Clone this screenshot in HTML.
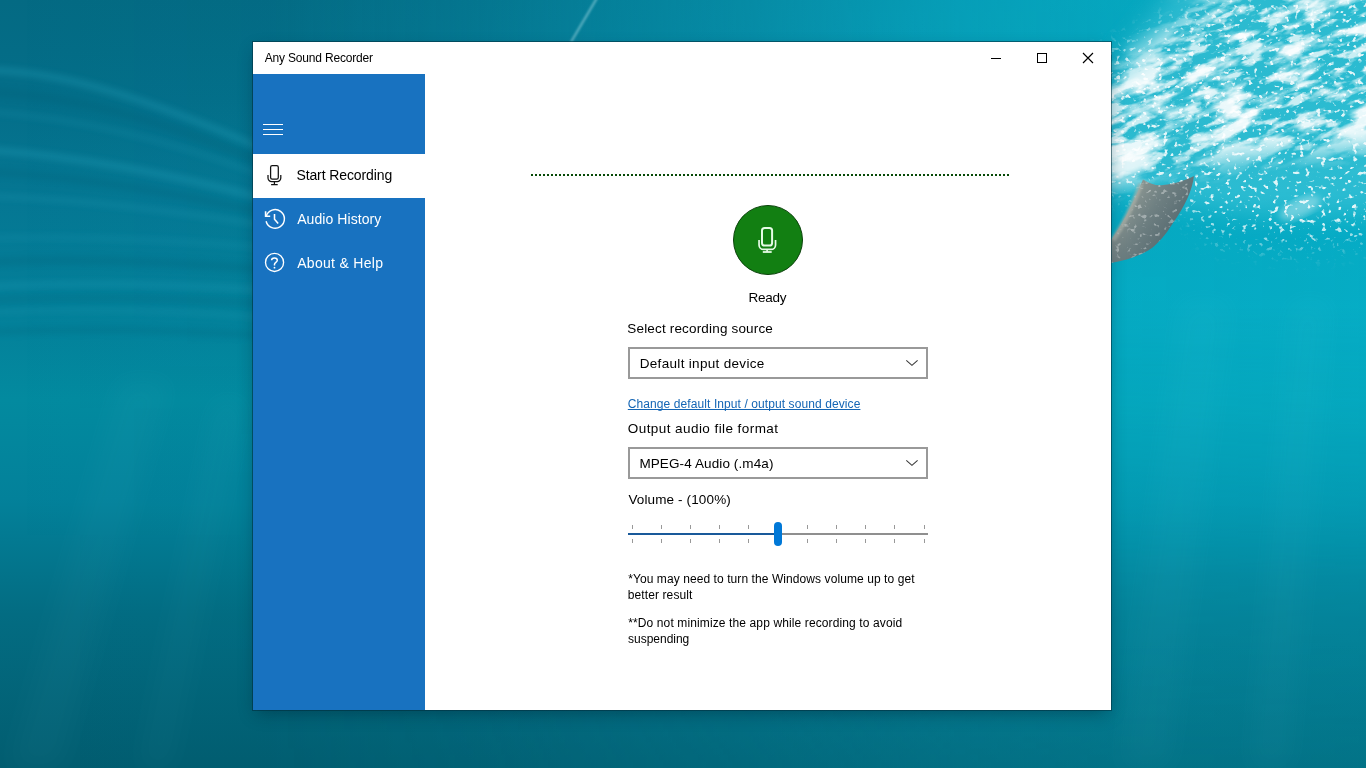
<!DOCTYPE html>
<html lang="en">
<head>
<meta charset="utf-8">
<title>Any Sound Recorder</title>
<style>
*{box-sizing:border-box;margin:0;padding:0}
html,body{width:1366px;height:768px;overflow:hidden;background:#067088}
body{position:relative;font-family:"Liberation Sans",sans-serif;color:#000}
#bg{position:absolute;left:0;top:0;width:1366px;height:768px;display:block}
#win{position:absolute;left:253px;top:42px;width:858px;height:668px;background:#fff;will-change:transform;
 box-shadow:0 0 0 1px rgba(0,45,60,.55),0 6px 16px -3px rgba(0,25,40,.4)}
.t{position:absolute;white-space:nowrap;line-height:1}
#side{position:absolute;left:0;top:32px;width:172px;height:636px;background:#1872c0}
#sel{position:absolute;left:0;top:112px;width:172px;height:44px;background:#fff}
svg{position:absolute;overflow:visible}
.combo{position:absolute;left:375px;width:300px;height:32px;border:2px solid #999;background:#fff}
.combo .t{left:10px}
.note{font-size:12px;line-height:16px}
#ticks i{position:absolute;width:1px;height:4px;background:#999}
</style>
</head>
<body>
<svg id="bg" width="1366" height="768" viewBox="0 0 1366 768">
<defs>
 <linearGradient id="gv" x1="0" y1="0" x2="0" y2="1">
  <stop offset="0" stop-color="#046a83"/>
  <stop offset=".13" stop-color="#046e89"/>
  <stop offset=".26" stop-color="#057793"/>
  <stop offset=".40" stop-color="#047f99"/>
  <stop offset=".52" stop-color="#038a9f"/>
  <stop offset=".65" stop-color="#03819a"/>
  <stop offset=".80" stop-color="#036c82"/>
  <stop offset="1" stop-color="#025d70"/>
 </linearGradient>
 <linearGradient id="gh" x1="0" y1="0" x2="1" y2="0">
  <stop offset="0" stop-color="#08bcd8" stop-opacity="0"/>
  <stop offset=".20" stop-color="#08bcd8" stop-opacity=".02"/>
  <stop offset=".35" stop-color="#08bcd8" stop-opacity=".15"/>
  <stop offset=".55" stop-color="#0abed9" stop-opacity=".40"/>
  <stop offset=".70" stop-color="#08bed8" stop-opacity=".62"/>
  <stop offset=".82" stop-color="#06bed6" stop-opacity=".72"/>
  <stop offset="1" stop-color="#06bed6" stop-opacity=".76"/>
 </linearGradient>
 <linearGradient id="gfade" x1="0" y1="0" x2="0" y2="1">
  <stop offset="0" stop-color="#fff" stop-opacity="1"/>
  <stop offset=".40" stop-color="#fff" stop-opacity=".95"/>
  <stop offset=".75" stop-color="#fff" stop-opacity=".42"/>
  <stop offset="1" stop-color="#fff" stop-opacity="0.3"/>
 </linearGradient>
 <mask id="mfade"><rect width="1366" height="768" fill="url(#gfade)"/></mask>
 <filter id="b9" x="-20%" y="-20%" width="140%" height="140%"><feGaussianBlur stdDeviation="13"/></filter>
 <mask id="mfoam" maskUnits="userSpaceOnUse" x="1000" y="-20" width="400" height="450">
  <path d="M1088 92L1150 48L1236 -24L1400 -24L1400 146L1250 156L1088 186Z" fill="#fff" filter="url(#b9)"/>
 </mask>
 <mask id="mbub" maskUnits="userSpaceOnUse" x="1000" y="-20" width="400" height="450">
  <path d="M1100 60L1236 -14L1390 -14L1390 236L1300 248L1215 238L1175 200L1100 190Z" fill="#fff" filter="url(#b9)"/>
 </mask>
 <filter id="foam" x="0" y="0" width="100%" height="100%" color-interpolation-filters="sRGB">
  <feTurbulence type="fractalNoise" baseFrequency="0.016 0.05" numOctaves="5" seed="4"/>
  <feColorMatrix type="matrix" values="0 0 0 0 1  0 0 0 0 1  0 0 0 0 1  5.5 0 0 0 -2.62"/>
 </filter>
 <filter id="foam2" x="0" y="0" width="100%" height="100%" color-interpolation-filters="sRGB">
  <feTurbulence type="fractalNoise" baseFrequency="0.04 0.11" numOctaves="4" seed="21"/>
  <feColorMatrix type="matrix" values="0 0 0 0 1  0 0 0 0 1  0 0 0 0 1  6 0 0 0 -3.05"/>
 </filter>
 <filter id="bub" x="0" y="0" width="100%" height="100%" color-interpolation-filters="sRGB">
  <feTurbulence type="fractalNoise" baseFrequency="0.19 0.21" numOctaves="2" seed="11"/>
  <feColorMatrix type="matrix" values="0 0 0 0 1  0 0 0 0 1  0 0 0 0 1  8 0 0 0 -4.9"/>
 </filter>
 <linearGradient id="gfin" x1="1125" y1="200" x2="1175" y2="235" gradientUnits="userSpaceOnUse">
  <stop offset="0" stop-color="#8d9893"/><stop offset=".45" stop-color="#6f8082"/><stop offset="1" stop-color="#566a70"/>
 </linearGradient>
 <clipPath id="cfin"><path d="M1111 263L1111 240C1120 228 1131 208 1143 179.500C1150 184 1157 186 1163 185C1175 184 1186 180 1194 176C1192 191 1185 206 1173 223C1165 236 1158 243 1152 248C1142 255 1128 260 1111 263Z"/></clipPath>
 <filter id="b12" x="-50%" y="-10%" width="200%" height="120%"><feGaussianBlur stdDeviation="12"/></filter>
 <filter id="b6"><feGaussianBlur stdDeviation="6"/></filter>
 <filter id="b3"><feGaussianBlur stdDeviation="3"/></filter>
 <filter id="b1"><feGaussianBlur stdDeviation=".8"/></filter>
</defs>
<rect width="1366" height="768" fill="url(#gv)"/>
<rect width="1366" height="768" fill="url(#gh)" mask="url(#mfade)"/>
<!-- foam -->
<path d="M1085 100L1190 -30L1400 -30L1400 215L1250 215L1085 190Z" fill="#5ad2e4" opacity=".45" filter="url(#b12)"/>
<g mask="url(#mfoam)">
 <g transform="rotate(-18 1250 90)">
  <rect x="900" y="-250" width="700" height="700" filter="url(#foam)" opacity=".9"/>
  <rect x="900" y="-250" width="700" height="700" filter="url(#foam2)" opacity=".75"/>
 </g>
</g>
<g mask="url(#mbub)">
 <rect x="1000" y="0" width="366" height="420" filter="url(#bub)" opacity=".85"/>
</g>
<ellipse cx="1130" cy="164" rx="24" ry="11" transform="rotate(-18 1130 164)" fill="#fff" opacity=".85" filter="url(#b3)"/>
<ellipse cx="1300" cy="208" rx="22" ry="9" transform="rotate(-25 1300 208)" fill="#fff" opacity=".35" filter="url(#b3)"/>
<!-- fin -->
<path d="M1111 263L1111 240C1120 228 1131 208 1143 179.500C1150 184 1157 186 1163 185C1175 184 1186 180 1194 176C1192 191 1185 206 1173 223C1165 236 1158 243 1152 248C1142 255 1128 260 1111 263Z" fill="url(#gfin)"/>
<rect x="1105" y="170" width="95" height="100" filter="url(#bub)" opacity=".35" clip-path="url(#cfin)"/>
<path d="M1141 184C1133 205 1124 224 1113 240" stroke="#a9b0a8" stroke-width="5" fill="none" opacity=".7" filter="url(#b1)"/>
<!-- waves -->
<g fill="none" stroke="#27a5bf" stroke-linecap="round" filter="url(#b3)" opacity=".3">
 <path d="M-10 70C60 72 140 95 270 152" stroke-width="7"/>
 <path d="M-10 112C80 118 170 140 270 178" stroke-width="5" opacity=".6"/>
 <path d="M-10 150C90 158 180 176 270 200" stroke-width="7"/>
 <path d="M-10 196C90 200 180 212 270 226" stroke-width="5" opacity=".7"/>
 <path d="M-10 238C90 236 180 240 270 248" stroke-width="5" opacity=".6"/>
 <path d="M-10 286C90 282 180 284 270 290" stroke-width="6" opacity=".8"/>
 <path d="M-10 312C90 308 180 310 270 318" stroke-width="4" opacity=".7"/>
</g>
<g fill="none" stroke="#03586e" stroke-linecap="round" filter="url(#b3)" opacity=".2">
 <path d="M-10 92C70 96 160 118 270 166" stroke-width="8"/>
 <path d="M-10 172C90 178 180 194 270 214" stroke-width="7"/>
 <path d="M-10 262C90 258 180 262 270 270" stroke-width="8"/>
 <path d="M-10 300C90 296 180 298 270 304" stroke-width="5"/>
 <path d="M-10 332C90 328 180 330 270 336" stroke-width="6"/>
</g>
<!-- streak -->
<path d="M597 -2L571 42" stroke="#a8dde6" stroke-width="2.200" opacity=".55" filter="url(#b1)"/>
<!-- rays -->
<g filter="url(#b12)" opacity=".03" fill="#8fe6f2">
 <path d="M1180 300L1230 300L1170 768L1120 768Z"/>
 <path d="M1290 300L1330 300L1290 768L1250 768Z"/>
 <path d="M120 380L170 380L60 768L10 768Z"/>
 <path d="M215 400L245 400L170 768L140 768Z"/>
</g>
<!--BG3-->
</svg>
<div id="win">
 <div id="side"></div>
 <div id="sel"></div>

 <div class="t" id="title" style="left:11.7px;top:10px;font-size:12px;letter-spacing:-0.18px">Any Sound Recorder</div>
 <!-- caption buttons -->
 <svg style="left:730px;top:0" width="128" height="32" viewBox="0 0 128 32" fill="none" stroke="#000" stroke-width="1">
  <path d="M8 16.5h10"/>
  <rect x="54.5" y="11.5" width="9" height="9"/>
  <path d="M100 11l10 10M110 11l-10 10" stroke-width="1.150"/>
 </svg>
 <!-- hamburger -->
 <svg style="left:10px;top:82px" width="20" height="12" viewBox="0 0 20 12" fill="#fff">
  <rect x="0" y="0" width="20" height="1"/><rect x="0" y="5" width="20" height="1"/><rect x="0" y="10" width="20" height="1"/>
 </svg>
 <!-- nav: mic -->
 <svg style="left:12px;top:121px" width="20" height="24" viewBox="0 0 20 24" fill="none" stroke="#111" stroke-width="1.25">
  <rect x="5.600" y="2.600" width="7.700" height="13.600" rx="1.600"/>
  <path d="M3 12v2.900a3.600 3.600 0 0 0 3.600 3.600h5.600a3.600 3.600 0 0 0 3.600-3.600V12M9.400 18.500v3M6.100 21.500h6.600"/>
 </svg>
 <div class="t" id="n1" style="left:43.4px;top:126px;font-size:14px;color:#000;letter-spacing:-0.1px">Start Recording</div>
 <!-- nav: history -->
 <svg style="left:10px;top:165px" width="24" height="24" viewBox="0 0 24 24" fill="none" stroke="#fff" stroke-width="1.45">
  <path d="M3.170 9.300A9.300 9.300 0 1 1 3.090 14.200"/>
  <path d="M2.600 4.300V9.300H7.200" stroke-width="1.600"/>
  <path d="M11.500 7v5.300l3.700 4.200" stroke-width="1.550"/>
 </svg>
 <div class="t" id="n2" style="left:44.2px;top:170px;font-size:14px;color:#fff;letter-spacing:0.07px">Audio History</div>
 <!-- nav: help -->
 <svg style="left:10px;top:209px" width="24" height="24" viewBox="0 0 24 24" fill="none" stroke="#fff" stroke-width="1.350">
  <circle cx="11.550" cy="11.450" r="9.050"/>
  <path d="M8.600 9.200C8.600 7.800 9.900 6.950 11.500 6.950C13.200 6.950 14.300 7.900 14.300 9.300C14.300 11.300 11.500 11.400 11.500 13.300V14.500" stroke-width="1.500"/>
  <circle cx="11.500" cy="16.700" r=".9" fill="#fff" stroke="none"/>
 </svg>
 <div class="t" id="n3" style="left:44.2px;top:214px;font-size:14px;color:#fff;letter-spacing:0.3px">About &amp; Help</div>

 <!-- dotted line -->
 <div id="dots" style="position:absolute;left:278px;top:132px;width:478px;height:2px;background:repeating-linear-gradient(90deg,#074a07 0 2px,transparent 2px 4px)"></div>
 <!-- record button -->
 <div id="rec" style="position:absolute;left:480px;top:163px;width:70px;height:70px;border-radius:50%;background:#127f12;border:1px solid #0a420a"></div>
 <svg style="left:502px;top:183px" width="26" height="30" viewBox="0 0 26 30" fill="none" stroke="#e6fbe6">
  <rect x="7" y="3" width="10.100" height="17.500" rx="2.600" stroke-width="2"/>
  <path d="M4.050 15v4.900a4.500 4.500 0 0 0 4.500 4.500h7.500a4.500 4.500 0 0 0 4.500-4.500V15M12.100 24.400V27" stroke-width="1.700"/>
  <path d="M7.800 27H16.700" stroke-width="1.800"/>
 </svg>
 <div class="t" id="ready" style="left:495.6px;top:249px;font-size:13.5px;letter-spacing:-0.3px">Ready</div>

 <div class="t" id="l1" style="left:374.3px;top:280px;font-size:13.5px;letter-spacing:0.17px">Select recording source</div>
 <div class="combo" style="top:305px"><span class="t" id="c1" style="left:9.7px;top:8px;font-size:13.5px;letter-spacing:0.32px">Default input device</span>
  <svg style="left:275px;top:10px" width="14" height="9" viewBox="0 0 14 9" fill="none" stroke="#3a3a3a" stroke-width="1.100"><path d="M1.300 1.400L6.950 6.350L12.600 1.400"/></svg></div>
 <div class="t" id="lnk" style="left:374.8px;top:356px;font-size:12px;color:#1465b4;text-decoration:underline;text-decoration-skip-ink:none;text-decoration-thickness:1px;text-underline-offset:1px;letter-spacing:0.09px">Change default Input / output sound device</div>
 <div class="t" id="l2" style="left:374.8px;top:380px;font-size:13.5px;letter-spacing:0.43px">Output audio file format</div>
 <div class="combo" style="top:405px"><span class="t" id="c2" style="left:9.4px;top:8px;font-size:13.5px;letter-spacing:0.11px">MPEG-4 Audio (.m4a)</span>
  <svg style="left:275px;top:10px" width="14" height="9" viewBox="0 0 14 9" fill="none" stroke="#3a3a3a" stroke-width="1.100"><path d="M1.300 1.400L6.950 6.350L12.600 1.400"/></svg></div>
 <div class="t" id="l3" style="left:375.4px;top:451px;font-size:13.5px;letter-spacing:0.13px">Volume - (100%)</div>
 <!-- slider -->
 <div id="slider" style="position:absolute;left:375px;top:480px;width:300px;height:24px">
  <div style="position:absolute;left:0;top:11px;width:300px;height:2px;background:#8f8f8f"></div>
  <div style="position:absolute;left:0;top:11px;width:150px;height:2px;background:#19599a"></div>
  <div id="ticks"><i style="left:4px;top:3px"></i><i style="left:4px;top:17px"></i><i style="left:33px;top:3px"></i><i style="left:33px;top:17px"></i><i style="left:62px;top:3px"></i><i style="left:62px;top:17px"></i><i style="left:91px;top:3px"></i><i style="left:91px;top:17px"></i><i style="left:120px;top:3px"></i><i style="left:120px;top:17px"></i><i style="left:150px;top:3px"></i><i style="left:150px;top:17px"></i><i style="left:179px;top:3px"></i><i style="left:179px;top:17px"></i><i style="left:208px;top:3px"></i><i style="left:208px;top:17px"></i><i style="left:237px;top:3px"></i><i style="left:237px;top:17px"></i><i style="left:266px;top:3px"></i><i style="left:266px;top:17px"></i><i style="left:296px;top:3px"></i><i style="left:296px;top:17px"></i></div>
  <div style="position:absolute;left:146px;top:0;width:8px;height:24px;border-radius:4px;background:#0078d7"></div>
 </div>
 <div class="t note" id="p1a" style="left:375.2px;top:529px;letter-spacing:0.08px">*You may need to turn the Windows volume up to get</div>
 <div class="t note" id="p1b" style="left:374.8px;top:545px;letter-spacing:0.1px">better result</div>
 <div class="t note" id="p2a" style="left:375.2px;top:573px;letter-spacing:0.12px">**Do not minimize the app while recording to avoid</div>
 <div class="t note" id="p2b" style="left:375.1px;top:589px;letter-spacing:-0.02px">suspending</div>

</div>
</body>
</html>
